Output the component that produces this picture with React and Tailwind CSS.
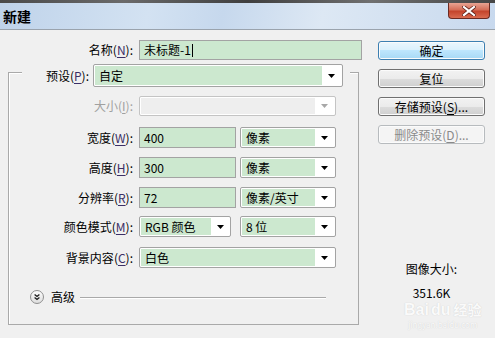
import React from 'react';

const FONT = { fontFamily: '"Noto Sans CJK SC", "Noto Sans", sans-serif' };

function Key({ k }) {
  // mnemonic letter, underlined
  return (
    <>
      (<span className="underline underline-offset-2 text-[#3b2f66]">{k}</span>)
    </>
  );
}

function Arrow({ disabled }) {
  return (
    <svg width="7" height="4" viewBox="0 0 7 4">
      <path d="M0 0H7L3.5 4Z" fill={disabled ? '#a8a8a8' : '#000'} />
    </svg>
  );
}

function Field({ w, h = 'h-[21px]', text, caret }) {
  return (
    <div className={`${w} ${h} border border-[#a3a3a3] bg-[#cce8cf] flex items-center pl-[4px] text-[12px] text-black`}>
      {text}
      {caret && <span className="w-px h-[13px] bg-black ml-[1px]" />}
    </div>
  );
}

function Combo({ w, h = 'h-[21px]', text, arrowW = 'w-[19px]', disabled }) {
  return (
    <div className={`${w} ${h} border ${disabled ? 'border-[#c4c4c4]' : 'border-[#a3a3a3]'} rounded-[2px] bg-white flex p-px`}>
      <div className={`flex-1 flex items-center pl-[4px] text-[12px] ${disabled ? 'bg-[#eeeeee]' : 'bg-[#cce8cf]'}`}>
        {text}
      </div>
      <div className={`${arrowW} flex items-center justify-center`}>
        <Arrow disabled={disabled} />
      </div>
    </div>
  );
}

function Row({ label, children, mt, disabled }) {
  return (
    <div className={`flex items-center ${mt}`}>
      <div className={`w-[124px] text-right text-[12px] ${disabled ? 'text-[#a0a0a0]' : 'text-black'}`}>{label}</div>
      <div className="ml-[6px] flex gap-[4px]">{children}</div>
    </div>
  );
}

function Btn({ children, primary, disabled }) {
  let cls = 'border-[#707070] bg-[linear-gradient(#f2f2f2_0%,#ebebeb_50%,#dddddd_50%,#cfcfcf_100%)] text-black';
  if (primary) cls = 'border-[#3c7fb1] bg-[linear-gradient(#eaf6fd_0%,#d9f0fc_50%,#bee6fd_50%,#a7d9f5_100%)] text-black';
  if (disabled) cls = 'border-[#b7bbbe] bg-[#f4f4f4] text-[#8a8a8a]';
  return (
    <div className={`h-[19px] w-[107px] border rounded-[3px] shadow-[inset_0_0_0_1px_#fbfbfb] flex items-center justify-center text-[12px] ${cls}`}>
      {children}
    </div>
  );
}

export default function App() {
  return (
    <div className="relative w-[495px] h-[338px] bg-[#f0f0f0] overflow-hidden leading-none" style={FONT}>
      {/* window top strip */}
      <div className="h-[3px] bg-[linear-gradient(90deg,#4a4a4a,#6a6a6a,#3f3f3f,#707070,#454545)]" />

      {/* title bar */}
      <div className="h-[27px] flex items-start justify-between border-b border-[#9aa3ad] bg-[linear-gradient(100deg,#bfd3ea_0%,#d3e2f2_30%,#c6d8ed_45%,#dde8f4_65%,#c8d9ee_100%)]">
        <span className="ml-[3px] mt-[6px] text-[14px] font-bold text-black">新建</span>
        <div className="mr-[5px] w-[42px] h-[16px] rounded-b-[4px] border border-[#6b2a22] border-t-0 bg-[linear-gradient(#e8a493_0%,#d46e58_45%,#c4442c_55%,#d96b50_100%)] flex items-center justify-center">
          <svg width="14" height="10" viewBox="0 0 14 10">
            <path d="M2 1L12 9M12 1L2 9" stroke="#5b1e16" strokeWidth="3.6" strokeLinecap="square" />
            <path d="M2 1L12 9M12 1L2 9" stroke="#fff" strokeWidth="2.2" strokeLinecap="square" />
          </svg>
        </div>
      </div>

      {/* body */}
      <div className="flex">
        {/* form */}
        <div className="w-[362px]">
          <div className="mt-[10px] flex items-center">
            <div className="w-[133px] text-right text-[12px]">名称<Key k="N" />:</div>
            <div className="ml-[6px]">
              <Field w="w-[223px]" h="h-[20px]" text="未标题-1" caret />
            </div>
          </div>

          <div className="mt-[12px] ml-[8px] w-[351px] h-[253px] border border-[#a9a9a9] shadow-[inset_1px_1px_0_#ffffff]">
            {/* preset row sits over the top border */}
            <div className="-mt-[9px] ml-[13px] w-[328px] h-[23px] bg-[#f0f0f0] flex items-center">
              <div className="w-[67px] text-right text-[12px]">预设<Key k="P" />:</div>
              <div className="ml-[4px]">
                <Combo w="w-[250px]" h="h-[23px]" text="自定" />
              </div>
            </div>

            <Row label={<>大小(<span className="underline underline-offset-2">I</span>):</>} mt="mt-[9px]" disabled>
              <Combo w="w-[197px]" h="h-[20px]" disabled />
            </Row>
            <Row label={<>宽度<Key k="W" />:</>} mt="mt-[11px]">
              <Field w="w-[97px]" text="400" />
              <Combo w="w-[96px]" text="像素" />
            </Row>
            <Row label={<>高度<Key k="H" />:</>} mt="mt-[9px]">
              <Field w="w-[97px]" text="300" />
              <Combo w="w-[96px]" text="像素" />
            </Row>
            <Row label={<>分辨率<Key k="R" />:</>} mt="mt-[9px]">
              <Field w="w-[97px]" text="72" />
              <Combo w="w-[96px]" text="像素/英寸" />
            </Row>
            <Row label={<>颜色模式<Key k="M" />:</>} mt="mt-[8px]">
              <div className="w-[92px]">
                <Combo w="w-[92px]" text="RGB 颜色" arrowW="w-[18px]" />
              </div>
              <div className="ml-[5px]">
                <Combo w="w-[96px]" text="8 位" />
              </div>
            </Row>
            <Row label={<>背景内容<Key k="C" />:</>} mt="mt-[10px]">
              <Combo w="w-[197px]" text="白色" />
            </Row>

            <div className="mt-[22px] ml-[21px] mr-[32px] flex items-center">
              <svg width="14" height="14" viewBox="0 0 14 14">
                <defs>
                  <linearGradient id="adv" x1="0" y1="0" x2="0" y2="1">
                    <stop offset="0" stopColor="#ffffff" />
                    <stop offset="1" stopColor="#dcdcdc" />
                  </linearGradient>
                </defs>
                <circle cx="7" cy="7" r="6.5" fill="url(#adv)" stroke="#8f8f8f" />
                <path d="M4.6 4.4L7 6.4L9.4 4.4M4.6 7.4L7 9.4L9.4 7.4" fill="none" stroke="#1e1e1e" strokeWidth="1.3" />
              </svg>
              <span className="ml-[7px] text-[12px]">高级</span>
              <div className="ml-[5px] flex-1 h-px bg-[#a9a9a9] shadow-[0_1px_0_#ffffff]" />
            </div>
          </div>
        </div>

        {/* buttons */}
        <div className="ml-[16px] w-[107px] pt-[11px] flex flex-col">
          <div className="flex flex-col gap-[9px]">
            <Btn primary>确定</Btn>
            <Btn>复位</Btn>
            <Btn>存储预设(<span className="underline underline-offset-2">S</span>)...</Btn>
            <Btn disabled>删除预设(<span className="underline underline-offset-2">D</span>)...</Btn>
          </div>
          <div className="mt-[118px] text-center text-[12px] leading-[14px]">图像大小:</div>
          <div className="mt-[11px] text-center text-[12px] leading-[12px]">351.6K</div>
        </div>
      </div>

      {/* Baidu watermark */}
      <div className="absolute left-[404px] top-[302px] flex flex-col items-center text-white opacity-70 [text-shadow:0_0_1px_#b8b8b8]">
        <div className="flex items-baseline font-bold text-[16px] leading-none" style={{ fontFamily: '"Liberation Sans", "Noto Sans CJK SC", sans-serif' }}>
          <span>Bai</span>
          <span className="ml-[2px]">du</span>
          <span className="ml-[3px] text-[14px]">经验</span>
        </div>
        <div className="text-[8px] leading-none mt-[3px]">jingyan.baidu.com</div>
      </div>
    </div>
  );
}
